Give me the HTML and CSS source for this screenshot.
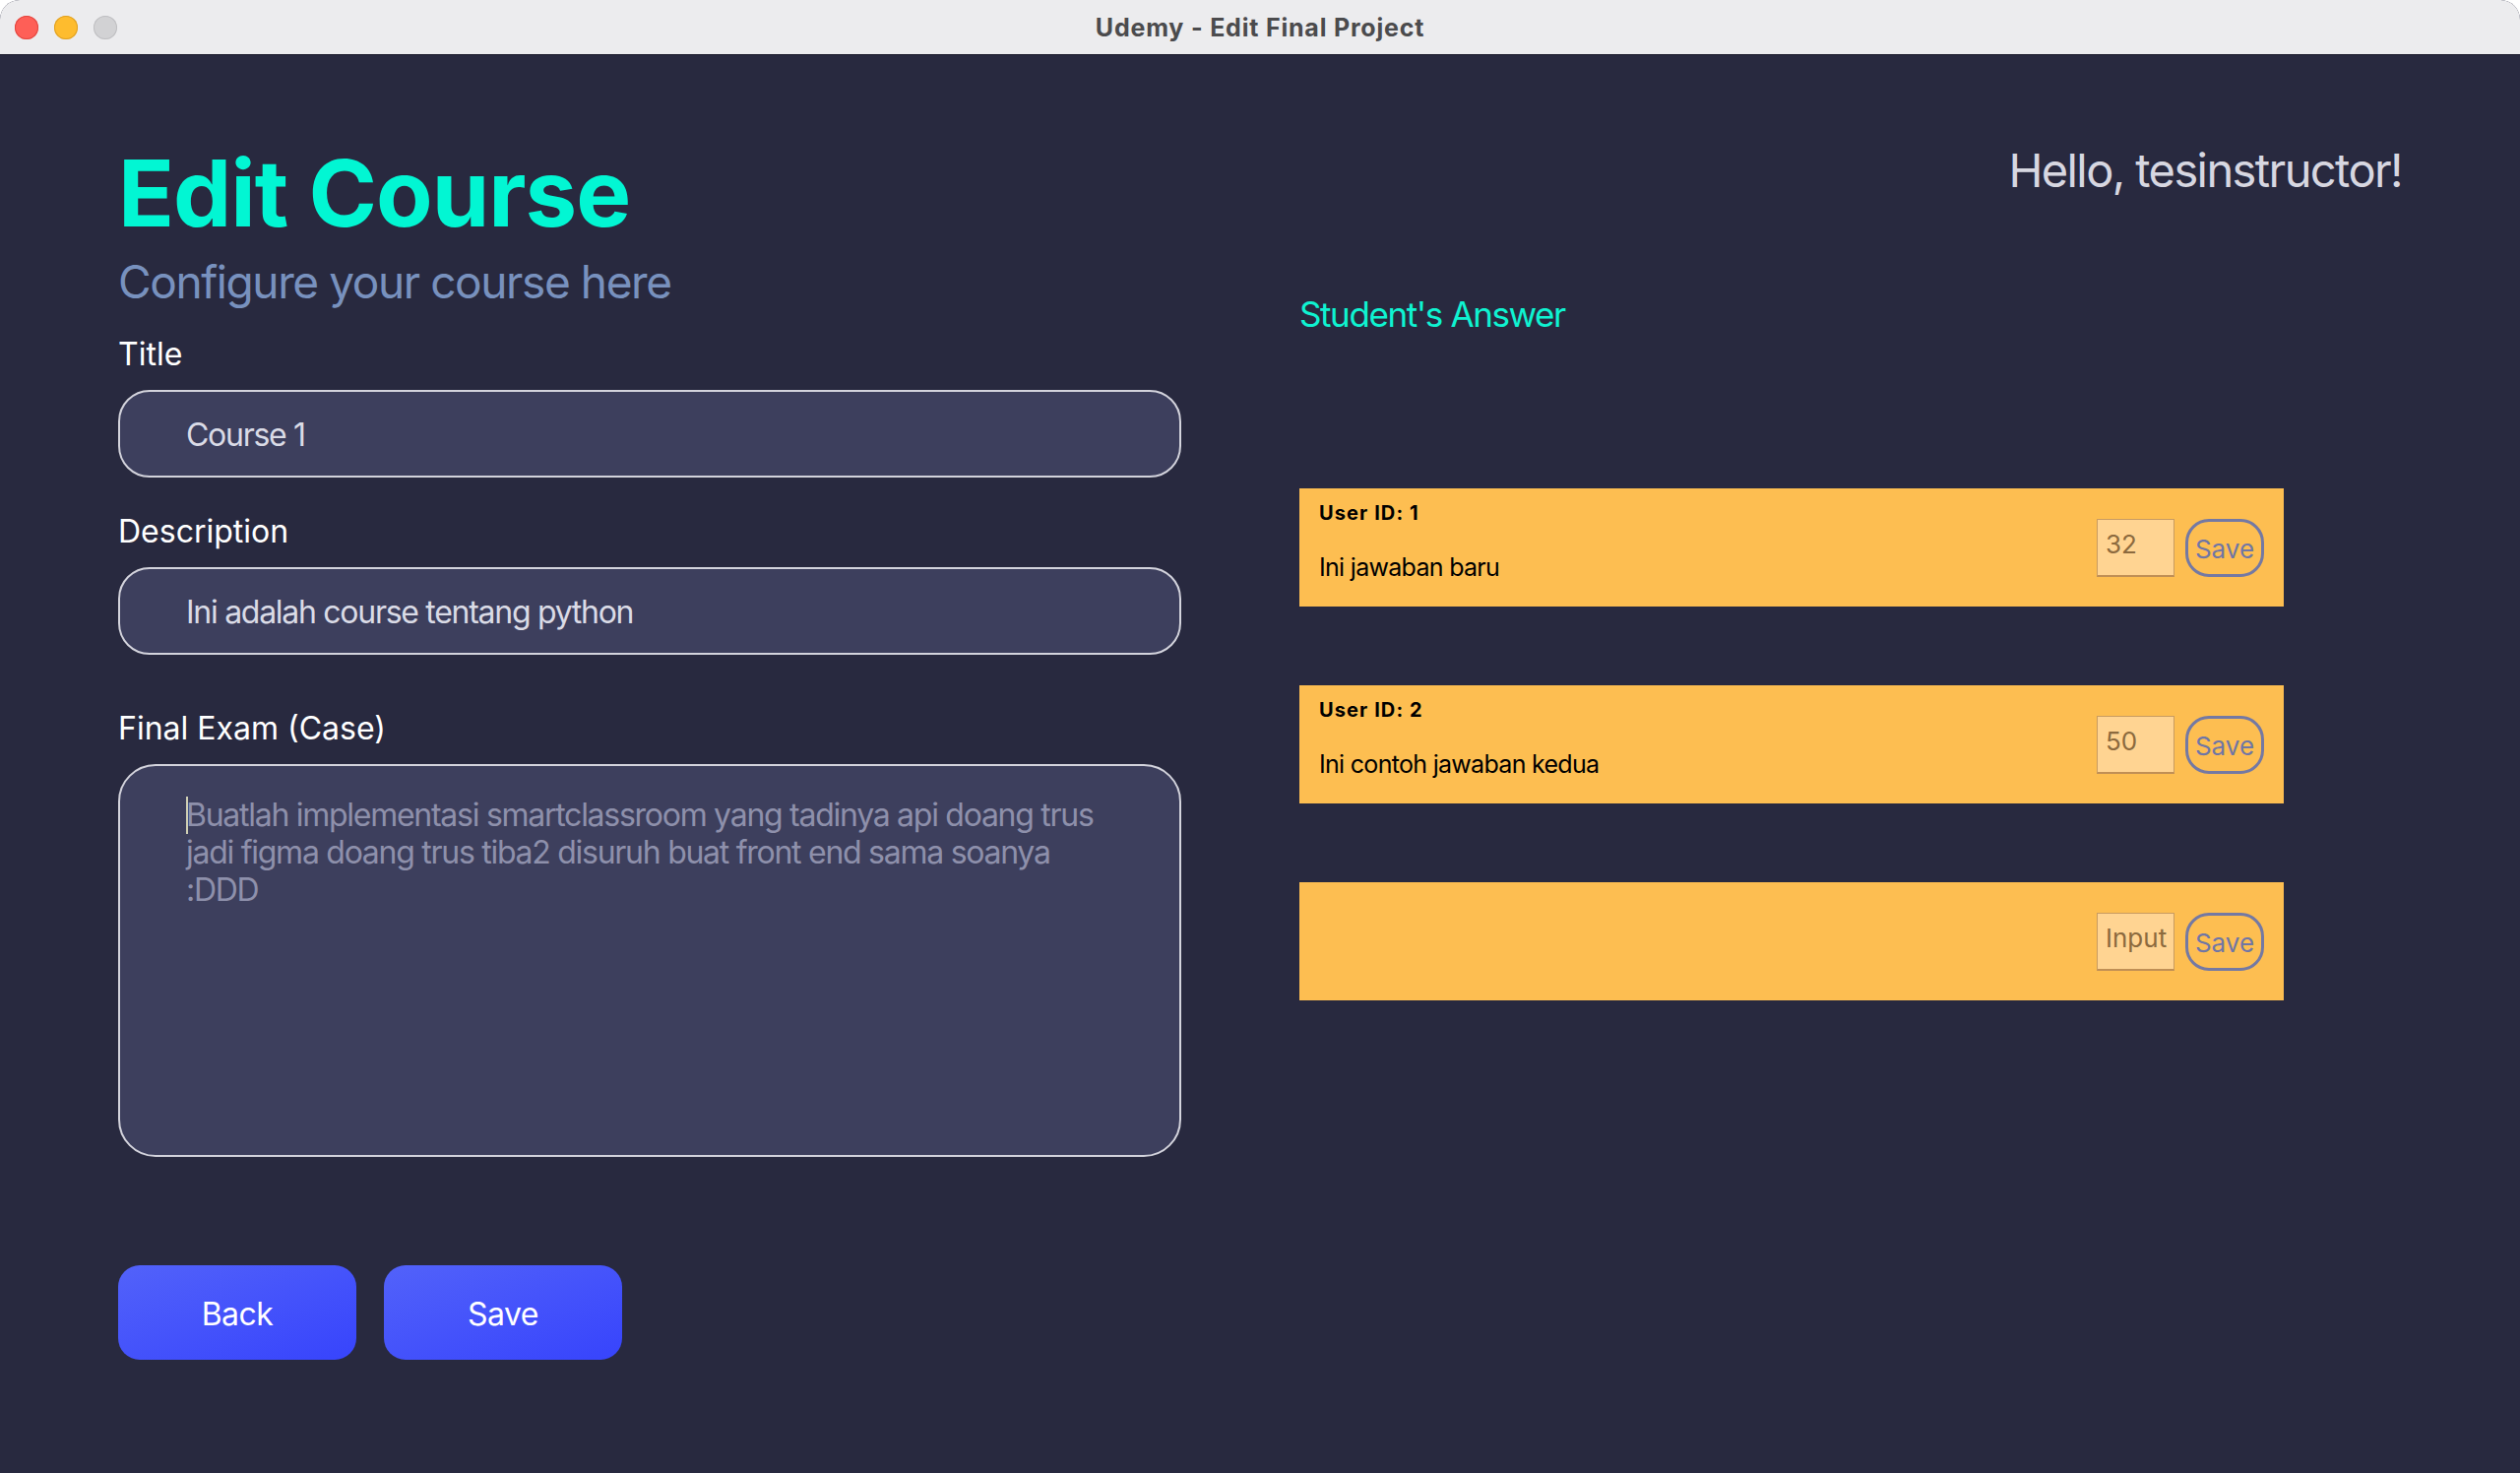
FILE: index.html
```html
<!DOCTYPE html>
<html lang="en">
<head>
<meta charset="utf-8">
<title>Udemy - Edit Final Project</title>
<link rel="stylesheet" href="styles.css">
</head>
<body>
<div class="window">
  <header class="titlebar">
    <div class="lights">
      <span class="light light-close"></span>
      <span class="light light-min"></span>
      <span class="light light-max"></span>
    </div>
    <div class="window-title">Udemy - Edit Final Project</div>
  </header>
  <main class="page">
    <section class="form-col">
      <h1 class="page-title">Edit Course</h1>
      <p class="subtitle">Configure your course here</p>
      <label class="field-label label-title">Title</label>
      <input class="text-input input-title" type="text" value="Course 1">
      <label class="field-label label-desc">Description</label>
      <input class="text-input input-desc" type="text" value="Ini adalah course tentang python">
      <label class="field-label label-exam">Final Exam (Case)</label>
      <div class="textarea"><span class="caret"></span>Buatlah implementasi smartclassroom yang tadinya api doang trus<br>jadi figma doang trus tiba2 disuruh buat front end sama soanya<br>:DDD</div>
      <div class="actions">
        <button class="btn-primary">Back</button>
        <button class="btn-primary">Save</button>
      </div>
    </section>
    <section class="answers-col">
      <div class="greeting">Hello, tesinstructor!</div>
      <h2 class="section-title">Student's Answer</h2>
      <div class="answer-list">
        <div class="answer-card">
          <div class="answer-info">
            <div class="answer-user">User ID: 1</div>
            <div class="answer-text">Ini jawaban baru</div>
          </div>
          <div class="answer-controls">
            <input class="score-input" type="text" value="32">
            <button class="btn-outline">Save</button>
          </div>
        </div>
        <div class="answer-card">
          <div class="answer-info">
            <div class="answer-user">User ID: 2</div>
            <div class="answer-text">Ini contoh jawaban kedua</div>
          </div>
          <div class="answer-controls">
            <input class="score-input" type="text" value="50">
            <button class="btn-outline">Save</button>
          </div>
        </div>
        <div class="answer-card">
          <div class="answer-info"></div>
          <div class="answer-controls">
            <input class="score-input" type="text" placeholder="Input">
            <button class="btn-outline">Save</button>
          </div>
        </div>
      </div>
    </section>
  </main>
</div>
</body>
</html>
```
FILE: styles.css
```css
* {
  box-sizing: border-box;
}

html, body {
  margin: 0;
  padding: 0;
  background: #ffffff;
}

body {
  font-family: Inter, "Noto Sans", "Liberation Sans", sans-serif;
}

.window {
  width: 2560px;
  height: 1496px;
  display: flex;
  flex-direction: column;
  border-radius: 20px 20px 0 0;
  overflow: hidden;
  background: #28293f;
}

.titlebar {
  height: 56px;
  flex: none;
  background: #ececee;
  border-bottom: 1px solid #18182a;
  display: flex;
  align-items: center;
  position: relative;
}

.lights {
  display: flex;
  gap: 16px;
  padding-left: 15px;
}

.light {
  width: 24px;
  height: 24px;
  border-radius: 50%;
  display: block;
}

.light-close {
  background: #fe5f57;
  box-shadow: inset 0 0 0 1px #e2463f;
}

.light-min {
  background: #febc2e;
  box-shadow: inset 0 0 0 1px #dfa023;
}

.light-max {
  background: #d2d2d4;
  box-shadow: inset 0 0 0 1px #bfbfc2;
}

.window-title {
  position: absolute;
  left: 0;
  right: 0;
  top: 0;
  bottom: 0;
  display: flex;
  align-items: center;
  justify-content: center;
  font-size: 25px;
  letter-spacing: 0.8px;
  font-weight: 700;
  color: #4b4b4d;
  pointer-events: none;
}

.page {
  flex: 1;
  display: grid;
  grid-template-columns: 1080px 1120px;
  column-gap: 120px;
  padding: 83px 120px 0 120px;
}

/* Left column */
.form-col {
  display: flex;
  flex-direction: column;
  align-items: flex-start;
}

.page-title {
  margin: 0;
  font-size: 94px;
  line-height: 114px;
  font-weight: 700;
  color: #02f6d3;
  letter-spacing: -1px;
}

.subtitle {
  margin: 5px 0 0 0;
  font-size: 46px;
  line-height: 56px;
  font-weight: 400;
  color: #7891be;
  letter-spacing: -1.4px;
}

.field-label {
  display: block;
  font-size: 32px;
  line-height: 40px;
  color: #ffffff;
}

.label-title {
  margin-top: 26px;
}

.label-desc {
  margin-top: 35px;
}

.label-exam {
  margin-top: 55px;
}

.text-input {
  width: 1080px;
  height: 89px;
  margin-top: 16px;
  border: 2px solid #d3d3dc;
  border-radius: 32px;
  background: #3d3f5d;
  color: #dadbe6;
  font-family: inherit;
  font-size: 32px;
  line-height: 40px;
  letter-spacing: -1.28px;
  padding: 2px 40px 0 67px;
  outline: none;
}

.textarea {
  width: 1080px;
  height: 399px;
  margin-top: 16px;
  border: 2px solid #d3d3dc;
  border-radius: 38px;
  background: #3d3f5d;
  color: #8e90ab;
  font-size: 32px;
  line-height: 38px;
  letter-spacing: -1.27px;
  padding: 31px 40px 0 67px;
  white-space: nowrap;
}

.caret {
  display: inline-block;
  width: 0;
  height: 38px;
  border-left: 2px solid #cfcfb4;
  margin-right: -2px;
  vertical-align: top;
}

.actions {
  display: flex;
  gap: 28px;
  margin-top: 110px;
}

.btn-primary {
  width: 242px;
  height: 96px;
  border: none;
  border-radius: 22px;
  background: linear-gradient(160deg, #5262fa 0%, #3744fc 100%);
  color: #ffffff;
  font-family: inherit;
  font-size: 32px;
  letter-spacing: -0.5px;
  padding: 2px 0 0 0;
  cursor: pointer;
}

/* Right column */
.answers-col {
  display: flex;
  flex-direction: column;
}

.greeting {
  margin-top: 5px;
  text-align: right;
  font-size: 47px;
  line-height: 57px;
  color: #d7d7e1;
  letter-spacing: -1.6px;
}

.section-title {
  margin: 97px 0 0 0;
  font-size: 35px;
  line-height: 42px;
  font-weight: 400;
  color: #0ff3d1;
  letter-spacing: -1.4px;
}

.answer-list {
  margin-top: 156px;
  display: flex;
  flex-direction: column;
  gap: 80px;
}

.answer-card {
  width: 1000px;
  height: 120px;
  background: #fdbe51;
  display: flex;
  align-items: center;
  padding: 0 20px;
}

.answer-info {
  align-self: flex-start;
  padding-top: 13px;
  color: #000000;
}

.answer-user {
  font-size: 20px;
  line-height: 24px;
  font-weight: 700;
  letter-spacing: 1.1px;
}

.answer-text {
  margin-top: 28px;
  font-size: 25px;
  line-height: 30px;
  letter-spacing: -0.7px;
}

.answer-controls {
  margin-left: auto;
  display: flex;
  align-items: center;
  gap: 11px;
}

.score-input {
  width: 79px;
  height: 59px;
  border: 1px solid #c89b60;
  border-bottom: 2px solid #c08f55;
  background: #ffd492;
  color: #8c6a3e;
  font-family: inherit;
  font-size: 26px;
  line-height: 30px;
  padding: 10px 6px 16px 8px;
  outline: none;
}

.score-input::placeholder {
  color: #8c6a3e;
  opacity: 1;
}

.btn-outline {
  width: 80px;
  height: 59px;
  border: 3px solid #7479a3;
  border-radius: 24px;
  background: transparent;
  color: #6f76a6;
  font-family: inherit;
  font-size: 26px;
  padding: 2px 0 0 0;
  cursor: pointer;
}
```
